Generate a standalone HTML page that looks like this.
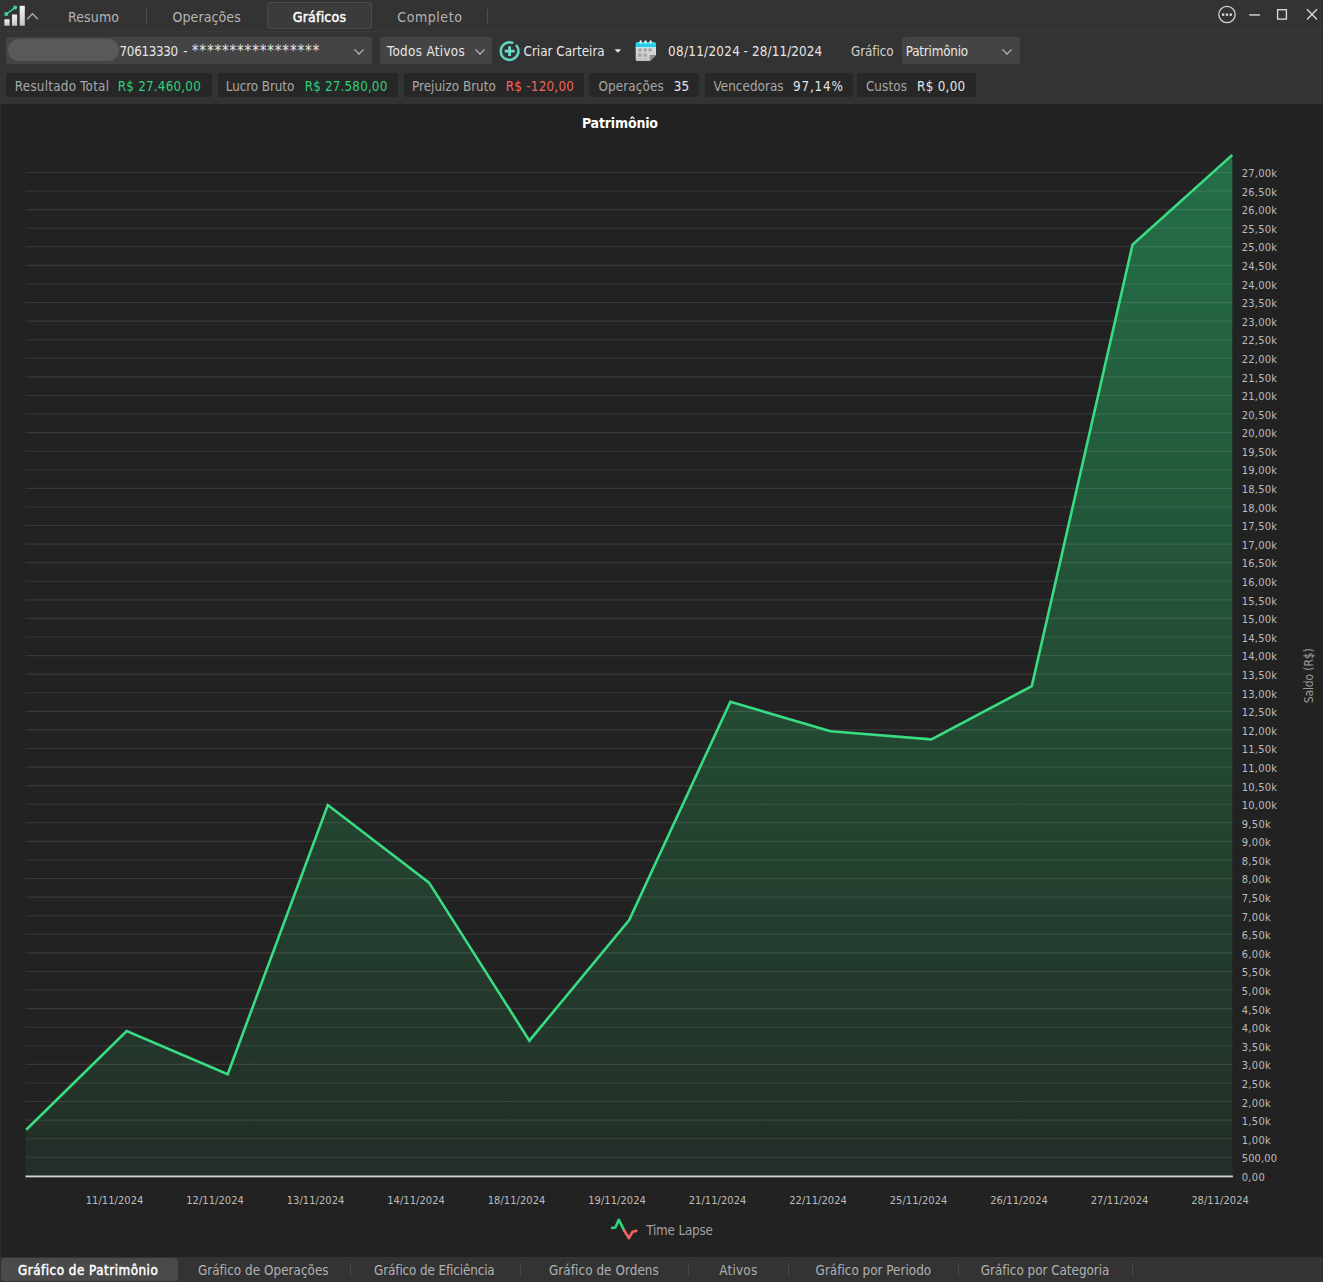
<!DOCTYPE html>
<html lang="pt-BR"><head><meta charset="utf-8"><title>Patrimônio</title>
<style>html,body{margin:0;padding:0;background:#333333;}
body{width:1323px;height:1282px;position:relative;overflow:hidden;font-family:"DejaVu Sans Condensed", "DejaVu Sans", "Liberation Sans", sans-serif;font-stretch:condensed;}
.abs{position:absolute;}
.t{position:absolute;white-space:pre;line-height:20px;height:20px;}
.l{font-family:"Liberation Sans",sans-serif;}</style></head><body>
<div class="abs" style="left:0px;top:104px;width:1323.0px;height:1153.0px;background:#222222;"></div>
<div class="abs" style="left:0px;top:104px;width:1.2px;height:1153.0px;background:#2e2e2e;"></div>
<div class="abs" style="left:0px;top:31px;width:1323.0px;height:1.0px;background:#393939;"></div>
<div class="abs" style="left:267px;top:2px;width:105.0px;height:27.0px;background:#3b3b3b;border-radius:4px;box-shadow:inset 0 0 0 1px #4b4b4b;"></div>
<div class="abs" style="left:145.5px;top:9px;width:1.0px;height:15.0px;background:#4e4e4e;"></div>
<div class="abs" style="left:487.0px;top:9px;width:1.0px;height:15.0px;background:#4e4e4e;"></div>
<div class="abs" style="left:6px;top:37.3px;width:366.0px;height:27.0px;background:#444444;border-radius:3px;"></div>
<div class="abs" style="left:8.2px;top:38.6px;width:110.4px;height:22.4px;background:#58595a;border-radius:11px;"></div>
<div class="abs" style="left:379.5px;top:37.3px;width:112.5px;height:27.0px;background:#444444;border-radius:3px;"></div>
<div class="abs" style="left:902px;top:37.3px;width:118.0px;height:27.0px;background:#444444;border-radius:3px;"></div>
<div class="abs" style="left:5.5px;top:73.2px;width:206.5px;height:24.0px;background:#272727;border-radius:3px;"></div>
<div class="abs" style="left:217.5px;top:73.2px;width:180.3px;height:24.0px;background:#272727;border-radius:3px;"></div>
<div class="abs" style="left:403.5px;top:73.2px;width:180.3px;height:24.0px;background:#272727;border-radius:3px;"></div>
<div class="abs" style="left:589.3px;top:73.2px;width:110.0px;height:24.0px;background:#272727;border-radius:3px;"></div>
<div class="abs" style="left:704.9px;top:73.2px;width:147.8px;height:24.0px;background:#272727;border-radius:3px;"></div>
<div class="abs" style="left:857.3px;top:73.2px;width:118.7px;height:24.0px;background:#272727;border-radius:3px;"></div>
<div class="abs" style="left:0px;top:1257px;width:1323.0px;height:25.0px;background:#333333;"></div>
<div class="abs" style="left:1.2px;top:1257.5px;width:177.2px;height:23.5px;background:#4a4a4a;border-radius:4px 4px 3px 3px;"></div>
<div class="abs" style="left:349.5px;top:1263px;width:1.0px;height:14.0px;background:#474747;"></div>
<div class="abs" style="left:519.7px;top:1263px;width:1.0px;height:14.0px;background:#474747;"></div>
<div class="abs" style="left:688.2px;top:1263px;width:1.0px;height:14.0px;background:#474747;"></div>
<div class="abs" style="left:788.2px;top:1263px;width:1.0px;height:14.0px;background:#474747;"></div>
<div class="abs" style="left:958.4px;top:1263px;width:1.0px;height:14.0px;background:#474747;"></div>
<div class="abs" style="left:1132.2px;top:1263px;width:1.0px;height:14.0px;background:#474747;"></div>
<svg class="abs" style="left:0;top:0" width="1323" height="1282" viewBox="0 0 1323 1282">
<defs><linearGradient id="fg" gradientUnits="userSpaceOnUse" x1="0" y1="150" x2="0" y2="1176"><stop offset="0" stop-color="#246f47"/><stop offset="0.58" stop-color="#234832"/><stop offset="1" stop-color="#232e28"/></linearGradient></defs>
<path d="M25.5,1176.4 L25.5,1129.7 L126.7,1031.1 L227.7,1074.3 L327.8,805.0 L429.0,882.6 L529.4,1040.7 L629.2,920.1 L730.4,701.7 L830.5,731.3 L931.4,739.3 L1031.8,686.1 L1132.5,244.8 L1232.3,154.9 L1232.3,1176.4 Z" fill="url(#fg)"/>
<path d="M25.5,1157.3H1232.3 M25.5,1138.72H1232.3 M25.5,1120.13H1232.3 M25.5,1101.55H1232.3 M25.5,1082.97H1232.3 M25.5,1064.39H1232.3 M25.5,1045.81H1232.3 M25.5,1027.22H1232.3 M25.5,1008.64H1232.3 M25.5,990.06H1232.3 M25.5,971.48H1232.3 M25.5,952.9H1232.3 M25.5,934.31H1232.3 M25.5,915.73H1232.3 M25.5,897.15H1232.3 M25.5,878.57H1232.3 M25.5,859.99H1232.3 M25.5,841.4H1232.3 M25.5,822.82H1232.3 M25.5,804.24H1232.3 M25.5,785.66H1232.3 M25.5,767.08H1232.3 M25.5,748.49H1232.3 M25.5,729.91H1232.3 M25.5,711.33H1232.3 M25.5,692.75H1232.3 M25.5,674.17H1232.3 M25.5,655.58H1232.3 M25.5,637.0H1232.3 M25.5,618.42H1232.3 M25.5,599.84H1232.3 M25.5,581.26H1232.3 M25.5,562.67H1232.3 M25.5,544.09H1232.3 M25.5,525.51H1232.3 M25.5,506.93H1232.3 M25.5,488.35H1232.3 M25.5,469.76H1232.3 M25.5,451.18H1232.3 M25.5,432.6H1232.3 M25.5,414.02H1232.3 M25.5,395.44H1232.3 M25.5,376.85H1232.3 M25.5,358.27H1232.3 M25.5,339.69H1232.3 M25.5,321.11H1232.3 M25.5,302.53H1232.3 M25.5,283.94H1232.3 M25.5,265.36H1232.3 M25.5,246.78H1232.3 M25.5,228.2H1232.3 M25.5,209.62H1232.3 M25.5,191.03H1232.3 M25.5,172.45H1232.3" stroke="#ffffff" stroke-opacity="0.10" stroke-width="1.1" fill="none"/>
<polyline points="26.2,1129.7 126.7,1031.1 227.7,1074.3 327.8,805.0 429.0,882.6 529.4,1040.7 629.2,920.1 730.4,701.7 830.5,731.3 931.4,739.3 1031.8,686.1 1132.5,244.8 1232.3,154.9" fill="none" stroke="#38dc82" stroke-width="2.6" stroke-linejoin="miter" stroke-linecap="butt"/>
<rect x="25.5" y="1175.5" width="1207.3999999999999" height="1.8" fill="#d4d8d4"/>
<polyline points="612.2,1227.9 615.4,1227.5 618.8,1219.8 624,1230.2" fill="none" stroke="#2fd47c" stroke-width="2.7" stroke-linejoin="round" stroke-linecap="round"/>
<polyline points="624,1230.2 629,1238.2 632.6,1231.7 636.2,1230.9" fill="none" stroke="#f0605f" stroke-width="2.7" stroke-linejoin="round" stroke-linecap="round"/>
</svg>
<svg class="abs" style="left:0;top:0" width="44" height="32" viewBox="0 0 44 32">
<defs><linearGradient id="bg1" x1="0" y1="0" x2="0" y2="1"><stop offset="0" stop-color="#f4f4f4"/><stop offset="1" stop-color="#c4c4c4"/></linearGradient></defs>
<rect x="4.4" y="19.3" width="5.2" height="6.4" fill="url(#bg1)"/>
<rect x="12" y="14.5" width="5.1" height="11.2" fill="url(#bg1)"/>
<rect x="19.7" y="5.8" width="5.1" height="19.9" fill="url(#bg1)"/>
<path d="M6.3 14 L15.1 7.6" stroke="#36d4a6" stroke-width="1.5" fill="none"/>
<circle cx="6.3" cy="14" r="2.1" fill="#36d4a6"/><circle cx="15.1" cy="7.6" r="2" fill="#36d4a6"/>
<path d="M27.2 19.3 L32.5 13.8 L37.9 19.3" fill="none" stroke="#a8a8a8" stroke-width="1.4"/>
</svg>
<svg class="abs" style="left:1210px;top:0" width="113" height="32" viewBox="1210 0 113 32">
<circle cx="1227" cy="14.5" r="8.2" fill="none" stroke="#cfcfcf" stroke-width="1.3"/>
<rect x="1222" y="13.5" width="2.3" height="2.3" fill="#dcdcdc"/><rect x="1225.8" y="13.5" width="2.3" height="2.3" fill="#dcdcdc"/><rect x="1229.6" y="13.5" width="2.3" height="2.3" fill="#dcdcdc"/>
<rect x="1249.3" y="14.2" width="10.7" height="1.5" fill="#cfcfcf"/>
<rect x="1277.6" y="9.7" width="8.8" height="9.4" fill="none" stroke="#d4d4d4" stroke-width="1.4"/>
<path d="M1307 9.2 L1317 19.6 M1317 9.2 L1307 19.6" stroke="#d4d4d4" stroke-width="1.4" fill="none"/>
</svg>
<svg class="abs" style="left:353.1px;top:48.4px" width="12" height="8" viewBox="0 0 12 8"><path d="M1.4 1.4 L6 6 L10.6 1.4" fill="none" stroke="#b4b4b4" stroke-width="1.25"/></svg>
<svg class="abs" style="left:473.6px;top:48.4px" width="12" height="8" viewBox="0 0 12 8"><path d="M1.4 1.4 L6 6 L10.6 1.4" fill="none" stroke="#b4b4b4" stroke-width="1.25"/></svg>
<svg class="abs" style="left:1000.6px;top:48.4px" width="12" height="8" viewBox="0 0 12 8"><path d="M1.4 1.4 L6 6 L10.6 1.4" fill="none" stroke="#b4b4b4" stroke-width="1.25"/></svg>
<svg class="abs" style="left:497px;top:38px" width="26" height="26" viewBox="497 38 26 26">
<path d="M 512.32 42.73 A 8.8 8.8 0 1 0 516.63 45.80" fill="none" stroke="#62d6c4" stroke-width="2.5" stroke-linecap="round"/>
<path d="M504.7 51.1 H514.6 M509.6 46.2 V56.1" stroke="#6adfce" stroke-width="2.7" fill="none"/>
</svg>
<svg class="abs" style="left:613px;top:48px" width="10" height="6" viewBox="0 0 10 6"><path d="M1.6 1.2 H8.2 L4.9 4.8 Z" fill="#e6e6e6"/></svg>
<svg class="abs" style="left:634px;top:38px" width="24" height="24" viewBox="634 38 24 24">
<defs><linearGradient id="cb" x1="0" y1="0" x2="0" y2="1"><stop offset="0" stop-color="#e0e0e0"/><stop offset="1" stop-color="#c2c2c2"/></linearGradient>
<linearGradient id="ch" x1="0" y1="0" x2="0" y2="1"><stop offset="0" stop-color="#3bdaf0"/><stop offset="1" stop-color="#19c6e0"/></linearGradient></defs>
<path d="M635.7 46 H656 V55.1 L650 60.9 H637.2 a1.5 1.5 0 0 1 -1.5 -1.5 Z" fill="url(#cb)"/>
<path d="M649.9 55.1 H656 L649.9 60.9 Z" fill="#8a8a8a"/>
<path d="M635.7 47 V43.7 a1.7 1.7 0 0 1 1.7 -1.7 H654.3 a1.7 1.7 0 0 1 1.7 1.7 V47 Z" fill="url(#ch)"/>
<rect x="635.7" y="46.9" width="20.3" height="0.9" fill="#b2ecf4"/>
<rect x="639.65" y="40.3" width="2" height="3.4" rx="1" fill="#f4f4f4"/><rect x="644.5" y="40.3" width="2" height="3.4" rx="1" fill="#f4f4f4"/><rect x="649.6" y="40.3" width="2" height="3.4" rx="1" fill="#f4f4f4"/>
<g fill="#a2a2a2"><rect x="638.4" y="48.4" width="3.2" height="3.1"/><rect x="643.6" y="48.4" width="3.2" height="3.1"/><rect x="648.5" y="48.4" width="3.3" height="3.1"/>
<rect x="638.4" y="53.5" width="3.2" height="3.1"/><rect x="643.6" y="53.5" width="3.2" height="3.1"/></g>
</svg>
<span class="t" style="left:1281.5px;top:665.6px;width:54.7px;font-size:12px;letter-spacing:-0.12px;color:#9c9c9c;transform:rotate(-90deg);transform-origin:center;text-align:center;">Saldo (R$)</span>
<span class="t" style="left:68.00px;top:7.00px;font-size:14px;color:#b4b4b4;letter-spacing:0.119px;">Resumo</span>
<span class="t" style="left:172.50px;top:7.00px;font-size:14px;color:#b4b4b4;letter-spacing:0.088px;">Operações</span>
<span class="t" style="left:292.70px;top:7.00px;font-size:14px;color:#ffffff;-webkit-text-stroke:0.45px #ffffff;letter-spacing:0.215px;">Gráficos</span>
<span class="t" style="left:397.30px;top:7.00px;font-size:14px;color:#b4b4b4;letter-spacing:0.561px;">Completo</span>
<span class="t" style="left:119.60px;top:41.50px;font-size:13.33px;color:#e6e6e6;letter-spacing:-0.347px;">70613330</span>
<span class="t" style="left:183.30px;top:41.50px;font-size:13.33px;color:#e6e6e6;letter-spacing:0.572px;">-</span>
<span class="t" style="left:191.80px;top:41.00px;font-size:15px;color:#e6e6e6;letter-spacing:0.801px;">*****************</span>
<span class="t" style="left:387.00px;top:41.50px;font-size:13.33px;color:#e6e6e6;letter-spacing:0.338px;">Todos Ativos</span>
<span class="t" style="left:523.50px;top:41.50px;font-size:13.33px;color:#e6e6e6;letter-spacing:0.011px;">Criar Carteira</span>
<span class="t" style="left:668.10px;top:41.50px;font-size:13.33px;color:#e6e6e6;letter-spacing:0.288px;">08/11/2024</span>
<span class="t" style="left:743.50px;top:41.50px;font-size:13.33px;color:#e6e6e6;letter-spacing:0.572px;">-</span>
<span class="t" style="left:752.00px;top:41.50px;font-size:13.33px;color:#e6e6e6;letter-spacing:0.121px;">28/11/2024</span>
<span class="t" style="left:851.10px;top:41.50px;font-size:13.33px;color:#d0d0d0;letter-spacing:-0.110px;">Gráfico</span>
<span class="t" style="left:905.70px;top:41.50px;font-size:13.33px;color:#e6e6e6;letter-spacing:-0.193px;">Patrimônio</span>
<span class="t" style="left:14.80px;top:76.50px;font-size:13.33px;color:#a8a8a8;letter-spacing:0.238px;">Resultado Total</span>
<span class="t" style="left:117.80px;top:76.50px;font-size:13.33px;color:#2fd07b;letter-spacing:0.202px;">R$ 27.460,00</span>
<span class="t" style="left:225.80px;top:76.50px;font-size:13.33px;color:#a8a8a8;letter-spacing:-0.070px;">Lucro Bruto</span>
<span class="t" style="left:304.80px;top:76.50px;font-size:13.33px;color:#2fd07b;letter-spacing:0.156px;">R$ 27.580,00</span>
<span class="t" style="left:412.00px;top:76.50px;font-size:13.33px;color:#a8a8a8;letter-spacing:0.023px;">Prejuizo Bruto</span>
<span class="t" style="left:505.80px;top:76.50px;font-size:13.33px;color:#ee6460;letter-spacing:0.228px;">R$ -120,00</span>
<span class="t" style="left:598.50px;top:76.50px;font-size:13.33px;color:#a8a8a8;letter-spacing:0.117px;">Operações</span>
<span class="t" style="left:673.80px;top:76.50px;font-size:13.33px;color:#e4e4e4;letter-spacing:0.034px;">35</span>
<span class="t" style="left:713.50px;top:76.50px;font-size:13.33px;color:#a8a8a8;letter-spacing:0.056px;">Vencedoras</span>
<span class="t" style="left:793.10px;top:76.50px;font-size:13.33px;color:#e4e4e4;letter-spacing:0.796px;">97,14%</span>
<span class="t" style="left:865.90px;top:76.50px;font-size:13.33px;color:#a8a8a8;letter-spacing:0.097px;">Custos</span>
<span class="t" style="left:917.10px;top:76.50px;font-size:13.33px;color:#e4e4e4;letter-spacing:0.272px;">R$ 0,00</span>
<span class="t" style="left:581.90px;top:113.00px;font-size:14px;color:#ffffff;font-weight:700;letter-spacing:-0.169px;">Patrimônio</span>
<span class="t" style="left:646.20px;top:1220.50px;font-size:13.33px;color:#a0a0a0;letter-spacing:-0.177px;">Time Lapse</span>
<span class="t" style="left:18.00px;top:1260.50px;font-size:13.33px;color:#ffffff;-webkit-text-stroke:0.45px #ffffff;letter-spacing:0.495px;">Gráfico de Patrimônio</span>
<span class="t" style="left:197.90px;top:1260.50px;font-size:13.33px;color:#b0b0b0;letter-spacing:0.041px;">Gráfico de Operações</span>
<span class="t" style="left:374.10px;top:1260.50px;font-size:13.33px;color:#b0b0b0;letter-spacing:-0.118px;">Gráfico de Eficiência</span>
<span class="t" style="left:549.00px;top:1260.50px;font-size:13.33px;color:#b0b0b0;letter-spacing:0.072px;">Gráfico de Ordens</span>
<span class="t" style="left:719.30px;top:1260.50px;font-size:13.33px;color:#b0b0b0;letter-spacing:0.246px;">Ativos</span>
<span class="t" style="left:815.60px;top:1260.50px;font-size:13.33px;color:#b0b0b0;letter-spacing:0.016px;">Gráfico por Periodo</span>
<span class="t" style="left:980.80px;top:1260.50px;font-size:13.33px;color:#b0b0b0;letter-spacing:-0.015px;">Gráfico por Categoria</span>
<span class="t" style="left:1241.70px;top:1167.50px;font-size:11px;color:#bcbcbc;letter-spacing:0.356px;">0,00</span>
<span class="t" style="left:1241.70px;top:1148.50px;font-size:11px;color:#bcbcbc;letter-spacing:0.155px;">500,00</span>
<span class="t" style="left:1241.70px;top:1130.50px;font-size:11px;color:#bcbcbc;letter-spacing:0.334px;">1,00k</span>
<span class="t" style="left:1241.70px;top:1111.50px;font-size:11px;color:#bcbcbc;letter-spacing:0.334px;">1,50k</span>
<span class="t" style="left:1241.70px;top:1093.50px;font-size:11px;color:#bcbcbc;letter-spacing:0.334px;">2,00k</span>
<span class="t" style="left:1241.70px;top:1074.50px;font-size:11px;color:#bcbcbc;letter-spacing:0.334px;">2,50k</span>
<span class="t" style="left:1241.70px;top:1055.50px;font-size:11px;color:#bcbcbc;letter-spacing:0.334px;">3,00k</span>
<span class="t" style="left:1241.70px;top:1037.50px;font-size:11px;color:#bcbcbc;letter-spacing:0.334px;">3,50k</span>
<span class="t" style="left:1241.70px;top:1018.50px;font-size:11px;color:#bcbcbc;letter-spacing:0.334px;">4,00k</span>
<span class="t" style="left:1241.70px;top:1000.50px;font-size:11px;color:#bcbcbc;letter-spacing:0.334px;">4,50k</span>
<span class="t" style="left:1241.70px;top:981.50px;font-size:11px;color:#bcbcbc;letter-spacing:0.334px;">5,00k</span>
<span class="t" style="left:1241.70px;top:962.50px;font-size:11px;color:#bcbcbc;letter-spacing:0.334px;">5,50k</span>
<span class="t" style="left:1241.70px;top:944.50px;font-size:11px;color:#bcbcbc;letter-spacing:0.334px;">6,00k</span>
<span class="t" style="left:1241.70px;top:925.50px;font-size:11px;color:#bcbcbc;letter-spacing:0.334px;">6,50k</span>
<span class="t" style="left:1241.70px;top:907.50px;font-size:11px;color:#bcbcbc;letter-spacing:0.334px;">7,00k</span>
<span class="t" style="left:1241.70px;top:888.50px;font-size:11px;color:#bcbcbc;letter-spacing:0.334px;">7,50k</span>
<span class="t" style="left:1241.70px;top:869.50px;font-size:11px;color:#bcbcbc;letter-spacing:0.334px;">8,00k</span>
<span class="t" style="left:1241.70px;top:851.50px;font-size:11px;color:#bcbcbc;letter-spacing:0.334px;">8,50k</span>
<span class="t" style="left:1241.70px;top:832.50px;font-size:11px;color:#bcbcbc;letter-spacing:0.334px;">9,00k</span>
<span class="t" style="left:1241.70px;top:814.50px;font-size:11px;color:#bcbcbc;letter-spacing:0.334px;">9,50k</span>
<span class="t" style="left:1241.70px;top:795.50px;font-size:11px;color:#bcbcbc;letter-spacing:0.268px;">10,00k</span>
<span class="t" style="left:1241.70px;top:777.50px;font-size:11px;color:#bcbcbc;letter-spacing:0.268px;">10,50k</span>
<span class="t" style="left:1241.70px;top:758.50px;font-size:11px;color:#bcbcbc;letter-spacing:0.268px;">11,00k</span>
<span class="t" style="left:1241.70px;top:739.50px;font-size:11px;color:#bcbcbc;letter-spacing:0.268px;">11,50k</span>
<span class="t" style="left:1241.70px;top:721.50px;font-size:11px;color:#bcbcbc;letter-spacing:0.268px;">12,00k</span>
<span class="t" style="left:1241.70px;top:702.50px;font-size:11px;color:#bcbcbc;letter-spacing:0.268px;">12,50k</span>
<span class="t" style="left:1241.70px;top:684.50px;font-size:11px;color:#bcbcbc;letter-spacing:0.268px;">13,00k</span>
<span class="t" style="left:1241.70px;top:665.50px;font-size:11px;color:#bcbcbc;letter-spacing:0.268px;">13,50k</span>
<span class="t" style="left:1241.70px;top:646.50px;font-size:11px;color:#bcbcbc;letter-spacing:0.268px;">14,00k</span>
<span class="t" style="left:1241.70px;top:628.50px;font-size:11px;color:#bcbcbc;letter-spacing:0.268px;">14,50k</span>
<span class="t" style="left:1241.70px;top:609.50px;font-size:11px;color:#bcbcbc;letter-spacing:0.268px;">15,00k</span>
<span class="t" style="left:1241.70px;top:591.50px;font-size:11px;color:#bcbcbc;letter-spacing:0.268px;">15,50k</span>
<span class="t" style="left:1241.70px;top:572.50px;font-size:11px;color:#bcbcbc;letter-spacing:0.268px;">16,00k</span>
<span class="t" style="left:1241.70px;top:553.50px;font-size:11px;color:#bcbcbc;letter-spacing:0.268px;">16,50k</span>
<span class="t" style="left:1241.70px;top:535.50px;font-size:11px;color:#bcbcbc;letter-spacing:0.268px;">17,00k</span>
<span class="t" style="left:1241.70px;top:516.50px;font-size:11px;color:#bcbcbc;letter-spacing:0.268px;">17,50k</span>
<span class="t" style="left:1241.70px;top:498.50px;font-size:11px;color:#bcbcbc;letter-spacing:0.268px;">18,00k</span>
<span class="t" style="left:1241.70px;top:479.50px;font-size:11px;color:#bcbcbc;letter-spacing:0.268px;">18,50k</span>
<span class="t" style="left:1241.70px;top:460.50px;font-size:11px;color:#bcbcbc;letter-spacing:0.268px;">19,00k</span>
<span class="t" style="left:1241.70px;top:442.50px;font-size:11px;color:#bcbcbc;letter-spacing:0.268px;">19,50k</span>
<span class="t" style="left:1241.70px;top:423.50px;font-size:11px;color:#bcbcbc;letter-spacing:0.268px;">20,00k</span>
<span class="t" style="left:1241.70px;top:405.50px;font-size:11px;color:#bcbcbc;letter-spacing:0.268px;">20,50k</span>
<span class="t" style="left:1241.70px;top:386.50px;font-size:11px;color:#bcbcbc;letter-spacing:0.268px;">21,00k</span>
<span class="t" style="left:1241.70px;top:368.50px;font-size:11px;color:#bcbcbc;letter-spacing:0.268px;">21,50k</span>
<span class="t" style="left:1241.70px;top:349.50px;font-size:11px;color:#bcbcbc;letter-spacing:0.268px;">22,00k</span>
<span class="t" style="left:1241.70px;top:330.50px;font-size:11px;color:#bcbcbc;letter-spacing:0.268px;">22,50k</span>
<span class="t" style="left:1241.70px;top:312.50px;font-size:11px;color:#bcbcbc;letter-spacing:0.268px;">23,00k</span>
<span class="t" style="left:1241.70px;top:293.50px;font-size:11px;color:#bcbcbc;letter-spacing:0.268px;">23,50k</span>
<span class="t" style="left:1241.70px;top:275.50px;font-size:11px;color:#bcbcbc;letter-spacing:0.268px;">24,00k</span>
<span class="t" style="left:1241.70px;top:256.50px;font-size:11px;color:#bcbcbc;letter-spacing:0.268px;">24,50k</span>
<span class="t" style="left:1241.70px;top:237.50px;font-size:11px;color:#bcbcbc;letter-spacing:0.268px;">25,00k</span>
<span class="t" style="left:1241.70px;top:219.50px;font-size:11px;color:#bcbcbc;letter-spacing:0.268px;">25,50k</span>
<span class="t" style="left:1241.70px;top:200.50px;font-size:11px;color:#bcbcbc;letter-spacing:0.268px;">26,00k</span>
<span class="t" style="left:1241.70px;top:182.50px;font-size:11px;color:#bcbcbc;letter-spacing:0.268px;">26,50k</span>
<span class="t" style="left:1241.70px;top:163.50px;font-size:11px;color:#bcbcbc;letter-spacing:0.268px;">27,00k</span>
<span class="t" style="left:85.70px;top:1190.50px;font-size:11px;color:#bcbcbc;letter-spacing:0.063px;">11/11/2024</span>
<span class="t" style="left:186.20px;top:1190.50px;font-size:11px;color:#bcbcbc;letter-spacing:0.063px;">12/11/2024</span>
<span class="t" style="left:286.70px;top:1190.50px;font-size:11px;color:#bcbcbc;letter-spacing:0.063px;">13/11/2024</span>
<span class="t" style="left:387.20px;top:1190.50px;font-size:11px;color:#bcbcbc;letter-spacing:0.063px;">14/11/2024</span>
<span class="t" style="left:487.70px;top:1190.50px;font-size:11px;color:#bcbcbc;letter-spacing:0.063px;">18/11/2024</span>
<span class="t" style="left:588.20px;top:1190.50px;font-size:11px;color:#bcbcbc;letter-spacing:0.063px;">19/11/2024</span>
<span class="t" style="left:688.70px;top:1190.50px;font-size:11px;color:#bcbcbc;letter-spacing:0.063px;">21/11/2024</span>
<span class="t" style="left:789.20px;top:1190.50px;font-size:11px;color:#bcbcbc;letter-spacing:0.063px;">22/11/2024</span>
<span class="t" style="left:889.70px;top:1190.50px;font-size:11px;color:#bcbcbc;letter-spacing:0.063px;">25/11/2024</span>
<span class="t" style="left:990.20px;top:1190.50px;font-size:11px;color:#bcbcbc;letter-spacing:0.063px;">26/11/2024</span>
<span class="t" style="left:1090.70px;top:1190.50px;font-size:11px;color:#bcbcbc;letter-spacing:0.063px;">27/11/2024</span>
<span class="t" style="left:1191.20px;top:1190.50px;font-size:11px;color:#bcbcbc;letter-spacing:0.063px;">28/11/2024</span>
</body></html>
